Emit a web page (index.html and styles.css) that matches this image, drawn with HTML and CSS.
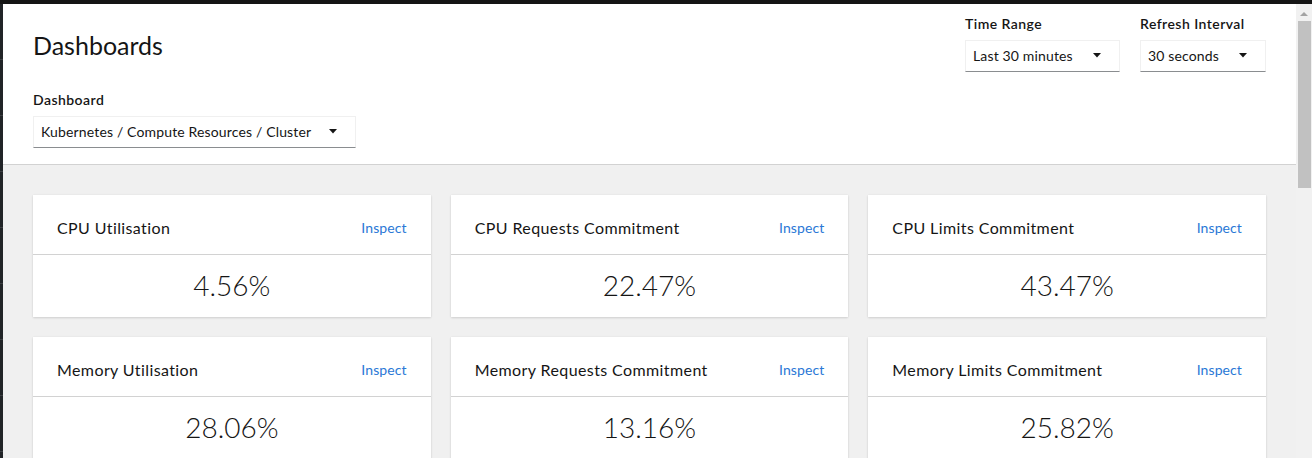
FILE: index.html
```html
<!DOCTYPE html>
<html lang="en">
<head>
<meta charset="utf-8">
<title>Dashboards</title>
<link rel="stylesheet" href="styles.css">
</head>
<body>
<div class="frame">
  <div class="topbar"></div>
  <div class="main">
    <div class="sidebar"></div>
    <div class="content">
      <header class="page-header">
        <div class="header-row">
          <h1 class="title">Dashboards</h1>
          <div class="controls">
            <div class="field">
              <label class="label">Time Range</label>
              <button class="select w-time"><span>Last 30 minutes</span><svg class="caret" viewBox="0 0 8 5" width="8" height="5"><path d="M0 0h8L4 4.5z" fill="#151515"/></svg></button>
            </div>
            <div class="field">
              <label class="label">Refresh Interval</label>
              <button class="select w-refresh"><span>30 seconds</span><svg class="caret" viewBox="0 0 8 5" width="8" height="5"><path d="M0 0h8L4 4.5z" fill="#151515"/></svg></button>
            </div>
          </div>
        </div>
        <div class="field dash-field">
          <label class="label">Dashboard</label>
          <button class="select w-dash"><span>Kubernetes / Compute Resources / Cluster</span><svg class="caret" viewBox="0 0 8 5" width="8" height="5"><path d="M0 0h8L4 4.5z" fill="#151515"/></svg></button>
        </div>
      </header>
      <section class="grid">
        <div class="card"><div class="card-head"><span class="card-title">CPU Utilisation</span><a class="inspect">Inspect</a></div><div class="card-body">4.56%</div></div>
        <div class="card"><div class="card-head"><span class="card-title">CPU Requests Commitment</span><a class="inspect">Inspect</a></div><div class="card-body">22.47%</div></div>
        <div class="card"><div class="card-head"><span class="card-title">CPU Limits Commitment</span><a class="inspect">Inspect</a></div><div class="card-body">43.47%</div></div>
        <div class="card"><div class="card-head"><span class="card-title">Memory Utilisation</span><a class="inspect">Inspect</a></div><div class="card-body">28.06%</div></div>
        <div class="card"><div class="card-head"><span class="card-title">Memory Requests Commitment</span><a class="inspect">Inspect</a></div><div class="card-body">13.16%</div></div>
        <div class="card"><div class="card-head"><span class="card-title">Memory Limits Commitment</span><a class="inspect">Inspect</a></div><div class="card-body">25.82%</div></div>
      </section>
    </div>
    <div class="scrollbar">
      <div class="sb-arrow"></div>
      <div class="sb-thumb"></div>
    </div>
  </div>
</div>
</body>
</html>
```
FILE: styles.css
```css
* { box-sizing: border-box; }
html, body { margin: 0; padding: 0; }
body {
  font-family: Lato, "Liberation Sans", sans-serif;
  color: #151515;
  background: #f0f0f0;
  overflow: hidden;
}
.frame { display: flex; flex-direction: column; height: 458px; }
.topbar { height: 4px; background: #151515; flex: none; }
.main { display: flex; flex: 1; min-height: 0; overflow: hidden; }
.sidebar {
  width: 3px; flex: none;
  background-color: #212427;
  background-image: repeating-linear-gradient(to bottom, transparent 0 55px, #3c3f42 55px 56px);
}
.content { flex: 1; min-width: 0; background: #f0f0f0; }
.page-header {
  background: #fff;
  border-bottom: 1px solid #d2d2d2;
  padding: 10px 30px 16px 30px;
  display: flex; flex-direction: column;
}
.header-row { display: flex; justify-content: space-between; align-items: flex-start; }
.title { margin: 15px 0 0 0; font-size: 25px; font-weight: 400; line-height: 32px; letter-spacing: 0; }
.controls { display: flex; gap: 20px; }
.field { display: flex; flex-direction: column; gap: 6px; }
.label { font-size: 14px; font-weight: 600; line-height: 20px; letter-spacing: 0.45px; }
.dash-field { margin-top: 18px; }
.select {
  height: 32px;
  display: flex; align-items: center; justify-content: space-between;
  padding: 0 18px 2px 7px;
  background: #fff;
  border: 1px solid #f0f0f0;
  border-bottom-color: #8a8d90;
  font: inherit; font-size: 14px; color: #151515;
  letter-spacing: 0.15px;
  text-align: left;
}
.caret { display: block; width: 8px; height: 5px; }
.w-time { width: 155px; }
.w-refresh { width: 126px; }
.w-dash { width: 323px; }
.grid {
  display: grid;
  grid-template-columns: repeat(3, 1fr);
  gap: 20px;
  padding: 30px;
}
.card {
  background: #fff;
  box-shadow: 0 1px 2px 0 rgba(3,3,3,.12), 0 0 2px 0 rgba(3,3,3,.06);
}
.card-head {
  display: flex; justify-content: space-between; align-items: center;
  padding: 21px 24px 14px 24px;
  border-bottom: 1px solid #d2d2d2;
  line-height: 24px;
}
.card-title { font-size: 16px; font-weight: 400; letter-spacing: 0.4px; }
.inspect { font-size: 14px; color: #2a78d6; letter-spacing: 0.1px; }
.card-body {
  text-align: center;
  font-size: 28px; line-height: 36px; font-weight: 300;
  padding: 12px 0 14px 0;
}
.scrollbar {
  width: 16px; flex: none;
  background: #f1f1f1;
  display: flex; flex-direction: column; align-items: center;
  padding-top: 8px;
}
.sb-arrow {
  width: 0; height: 0;
  border-left: 4px solid transparent;
  border-right: 4px solid transparent;
  border-bottom: 4px solid #a3a3a3;
}
.sb-thumb {
  margin-top: 5px;
  width: 13px; height: 167px;
  margin-left: 1px;
  background: #c1c1c1;
}
```
